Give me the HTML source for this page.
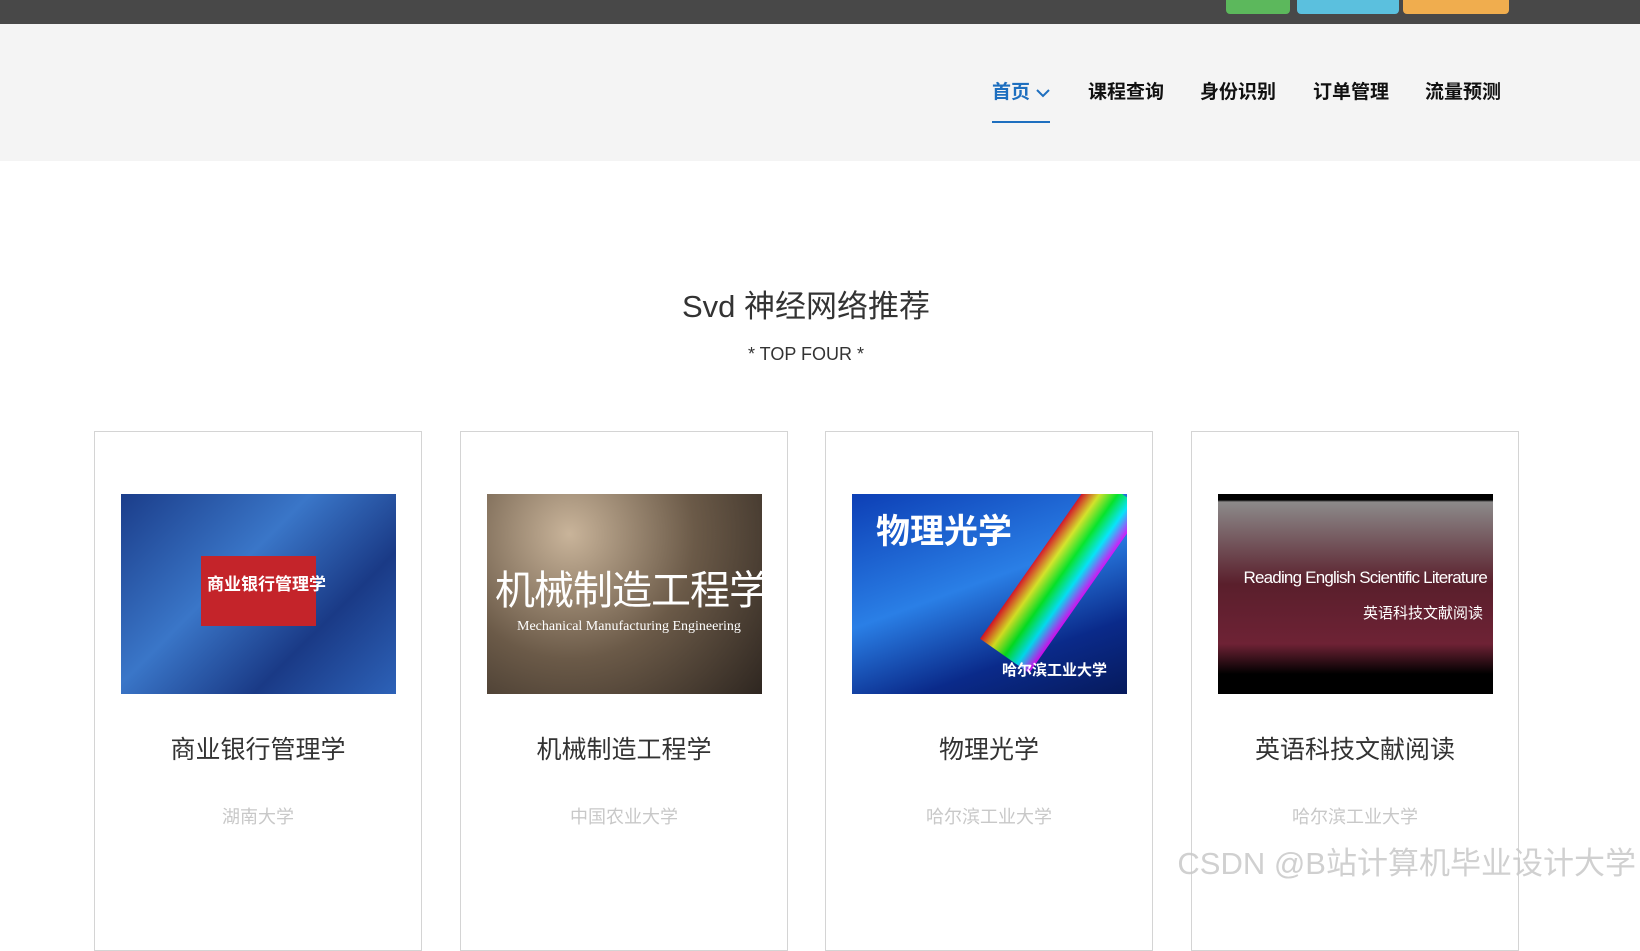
<!DOCTYPE html>
<html><head><meta charset="utf-8"><style>
*{margin:0;padding:0;box-sizing:border-box}
body{width:1640px;height:886px;overflow:hidden;background:#fff;font-family:"Liberation Sans","Noto Sans CJK SC",sans-serif;position:relative}
.top{position:absolute;left:0;top:0;width:1640px;height:24px;background:#484848}
.btn{position:absolute;top:0;height:14px;border-radius:0 0 4px 4px}
.nav{position:absolute;left:0;top:24px;width:1640px;height:137px;background:#f4f4f4}
.nav a{position:absolute;top:57px;font-size:19px;font-weight:bold;color:#111;text-decoration:none;line-height:24px}
h1{position:absolute;left:0;width:1612px;text-align:center;top:288px;font-size:31px;line-height:38px;font-weight:normal;color:#333}
.sub{position:absolute;left:0;width:1612px;text-align:center;top:344px;font-size:18px;color:#333}
.card{position:absolute;top:431px;width:328px;height:520px;border:1px solid #d4d4d4}
.img{position:absolute;left:26px;top:62px;width:275px;height:200px;overflow:hidden}
.t{position:absolute;top:302px;left:0;width:100%;text-align:center;font-size:25px;line-height:32px;color:#333}
.u{position:absolute;top:371px;left:0;width:100%;text-align:center;font-size:18px;color:#c8c8c8}
.wm{position:absolute;right:4px;top:838px;font-size:31px;color:rgba(200,200,200,0.85)}
</style></head><body>
<div class="top"></div>
<div class="btn" style="left:1226px;width:64px;background:#5cb85c"></div>
<div class="btn" style="left:1297px;width:102px;background:#5bc0de"></div>
<div class="btn" style="left:1403px;width:106px;background:#f0ad4e"></div>
<div class="nav">
<a style="left:992px;color:#1e6fbf">首页</a>
<svg style="position:absolute;left:1035px;top:64px" width="16" height="10" viewBox="0 0 16 10"><path d="M2 2 L8 8 L14 2" stroke="#1e6fbf" stroke-width="2" fill="none"/></svg>
<div style="position:absolute;left:992px;top:97px;width:58px;height:2px;background:#1e6fbf"></div>
<a style="left:1088px">课程查询</a>
<a style="left:1200px">身份识别</a>
<a style="left:1313px">订单管理</a>
<a style="left:1425px">流量预测</a>
</div>
<h1>Svd 神经网络推荐</h1>
<div class="sub">* TOP FOUR *</div>

<div class="card" style="left:94px"><div class="img" style="background:linear-gradient(135deg,#1b3d8a,#3a76c8 40%,#1a3a86 70%,#2d62b8)">
<div style="position:absolute;left:80px;top:62px;width:115px;height:70px;background:#c4242a;color:#fff;font-size:17px;font-weight:bold;padding:14px 6px;white-space:nowrap">商业银行管理学</div></div>
<div class="t">商业银行管理学</div><div class="u">湖南大学</div></div>

<div class="card" style="left:460px"><div class="img" style="background:radial-gradient(circle at 30% 20%,#c9b49a,#6b5a48 50%,#2e2620)">
<div style="position:absolute;left:8px;top:64px;color:#fff;font-size:40px;white-space:nowrap;letter-spacing:-1px">机械制造工程学</div>
<div style="position:absolute;left:30px;top:125px;color:#fff;font-size:14px;font-family:'Liberation Serif',serif;white-space:nowrap">Mechanical Manufacturing Engineering</div></div>
<div class="t">机械制造工程学</div><div class="u">中国农业大学</div></div>

<div class="card" style="left:825px"><div class="img" style="background:linear-gradient(160deg,#0d3fb5,#2a7fe6 45%,#0a2a8a 75%,#061a5c)">
<div style="position:absolute;left:180px;top:-20px;width:60px;height:200px;transform:rotate(35deg);background:linear-gradient(90deg,#f00,#ff0,#0f0,#0ff,#f0f);opacity:.8"></div>
<div style="position:absolute;left:24px;top:10px;color:#fff;font-size:34px;font-weight:bold">物理光学</div>
<div style="position:absolute;left:150px;top:165px;color:#fff;font-size:15px;font-weight:bold">哈尔滨工业大学</div></div>
<div class="t">物理光学</div><div class="u">哈尔滨工业大学</div></div>

<div class="card" style="left:1191px"><div class="img" style="background:linear-gradient(180deg,#000 0,#000 6px,#8c8a8a 8px,#5a1f2c 45%,#6e2235 75%,#000 90%)">
<div style="position:absolute;right:6px;top:74px;color:#fff;font-size:17px;white-space:nowrap;letter-spacing:-0.8px">Reading English Scientific Literature</div>
<div style="position:absolute;right:10px;top:108px;color:#fff;font-size:15px">英语科技文献阅读</div></div>
<div class="t">英语科技文献阅读</div><div class="u">哈尔滨工业大学</div></div>

<div class="wm">CSDN @B站计算机毕业设计大学</div>
</body></html>
